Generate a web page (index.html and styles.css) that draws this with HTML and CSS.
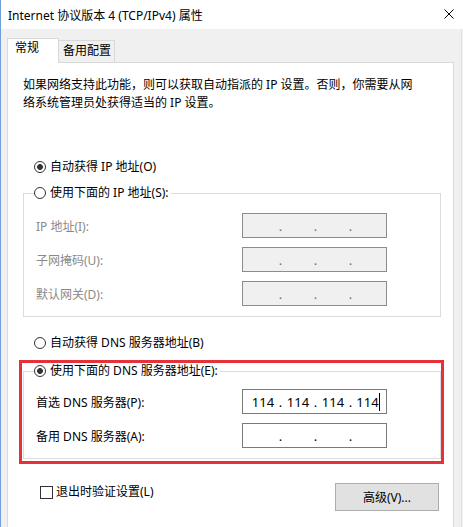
FILE: index.html
```html
<!DOCTYPE html>
<html lang="zh-CN">
<head>
  <meta charset="UTF-8">
  <meta name="viewport" content="width=device-width, initial-scale=1.0">
  <title>Internet 协议版本 4 (TCP/IPv4) 属性</title>
  <link rel="stylesheet" href="styles.css">
</head>
<body>
  <div class="window">
    <div class="titlebar">
      <span class="title">Internet 协议版本 4 (TCP/IPv4) 属性</span>
      <svg class="close" width="10" height="10" viewBox="0 0 10 10">
        <path d="M0.5 0.5 L9.5 9.5 M9.5 0.5 L0.5 9.5" stroke="#000" stroke-width="1" fill="none"/>
      </svg>
    </div>

    <div class="client">
      <div class="tabs">
        <div class="tab active">常规</div>
        <div class="tab">备用配置</div>
      </div>

      <div class="panel">
        <p class="intro">如果网络支持此功能，则可以获取自动指派的 IP 设置。否则，你需要从网<br>络系统管理员处获得适当的 IP 设置。</p>

        <label class="radio ipAuto"><span class="dot checked"></span>自动获得 IP 地址(O)</label>

        <fieldset class="group groupIp">
          <legend><label class="radio"><span class="dot"></span>使用下面的 IP 地址(S):</label></legend>
          <div class="field disabled first">
            <span class="label">IP 地址(I):</span>
            <div class="ipBox"><span class="oct"></span><span class="sep">.</span><span class="oct"></span><span class="sep">.</span><span class="oct"></span><span class="sep">.</span><span class="oct"></span></div>
          </div>
          <div class="field disabled">
            <span class="label">子网掩码(U):</span>
            <div class="ipBox"><span class="oct"></span><span class="sep">.</span><span class="oct"></span><span class="sep">.</span><span class="oct"></span><span class="sep">.</span><span class="oct"></span></div>
          </div>
          <div class="field disabled">
            <span class="label">默认网关(D):</span>
            <div class="ipBox"><span class="oct"></span><span class="sep">.</span><span class="oct"></span><span class="sep">.</span><span class="oct"></span><span class="sep">.</span><span class="oct"></span></div>
          </div>
        </fieldset>

        <label class="radio dnsAuto"><span class="dot"></span>自动获得 DNS 服务器地址(B)</label>

        <!-- red annotation box around the manual DNS group -->
        <div class="highlight">
          <fieldset class="group groupDns">
            <legend><label class="radio"><span class="dot checked"></span>使用下面的 DNS 服务器地址(E):</label></legend>
            <div class="field first">
              <span class="label">首选 DNS 服务器(P):</span>
              <div class="ipBox"><span class="oct">114</span><span class="sep">.</span><span class="oct">114</span><span class="sep">.</span><span class="oct">114</span><span class="sep">.</span><span class="oct"><span class="caret">114</span></span></div>
            </div>
            <div class="field">
              <span class="label">备用 DNS 服务器(A):</span>
              <div class="ipBox"><span class="oct"></span><span class="sep">.</span><span class="oct"></span><span class="sep">.</span><span class="oct"></span><span class="sep">.</span><span class="oct"></span></div>
            </div>
          </fieldset>
        </div>

        <div class="footer">
          <label class="check"><span class="box"></span>退出时验证设置(L)</label>
          <button class="button">高级(V)...</button>
        </div>
      </div>
    </div>
  </div>
</body>
</html>
```

FILE: styles.css
```css
* {
  box-sizing: border-box;
}

body {
  margin: 0;
  font-family: "Noto Sans", "Noto Sans CJK SC", sans-serif;
  font-size: 12px;
  color: #000;
  background: #f0f0f0;
  overflow: hidden;
}

.window {
  width: 463px;
  height: 527px;
  border-left: 1px solid #6f9fd8;
  display: flex;
  flex-direction: column;
  overflow: hidden;
}

/* Title bar */
.titlebar {
  height: 29px;
  flex-shrink: 0;
  background: #fff;
  display: flex;
  align-items: center;
  justify-content: space-between;
  padding: 0 9px 0 7px;
}

.close {
  margin-bottom: 2px;
}

/* Client area */
.client {
  flex: 1;
  background: #f0f0f0;
  border-right: 1px solid #e2e2e2;
  margin-right: 1px;
}

.tabs {
  display: flex;
  align-items: flex-end;
  padding: 9px 0 0 6px;
}

.tab {
  height: 22px;
  width: 57px;
  margin-left: -1px;
  padding: 1px 0 0 4px;
  line-height: 18px;
  background: #f0f0f0;
  border: 1px solid #d9d9d9;
  border-bottom: none;
}

.tab.active {
  position: relative;
  z-index: 1;
  margin-left: 0;
  width: 52px;
  height: 25px;
  padding: 0 0 0 7px;
  margin-bottom: -1px;
  background: #fff;
}

.panel {
  margin-left: 6px;
  width: 447px;
  height: 500px;
  background: #fff;
  border: 1px solid #d9d9d9;
  padding: 0 12px 0 15px;
}

.intro {
  margin: 13px 0 0 0;
  line-height: 18px;
}

/* Radio buttons */
.radio {
  display: flex;
  align-items: center;
  line-height: 18px;
  white-space: nowrap;
}

.dot {
  width: 12px;
  height: 12px;
  border: 1px solid #333;
  border-radius: 50%;
  margin-right: 4px;
  background: #fff;
  flex-shrink: 0;
}

.dot.checked {
  background: radial-gradient(circle, #333 0 2.6px, #fff 3.2px);
}

.ipAuto {
  margin: 46px 0 0 11px;
}

.dnsAuto {
  margin: 17px 0 0 11px;
}

/* Group boxes */
.group {
  margin: 0;
  border: 1px solid #dcdcdc;
  padding: 0 12px 10px 12px;
  min-inline-size: auto;
}

.group legend {
  padding: 0 2px 0 0;
  margin-left: -2px;
}

.groupIp {
  margin-top: 8px;
}

.field {
  display: flex;
  align-items: center;
  height: 25px;
  margin-top: 9px;
}

.groupIp .field.first {
  margin-top: 11px;
}

.groupDns .field.first {
  margin-top: 9px;
}

.label {
  width: 206px;
  white-space: nowrap;
}

.ipBox {
  width: 145px;
  height: 25px;
  border: 1px solid #7a7a7a;
  background: #fff;
  display: flex;
  align-items: center;
  padding-left: 5px;
  font-size: 13px;
  line-height: 18px;
}

.oct {
  width: 30px;
  text-align: center;
}

.sep {
  width: 5px;
  text-align: center;
}

.caret {
  border-right: 1px solid #000;
}

.field.disabled .label {
  color: #8a8a8a;
}

.field.disabled .ipBox {
  background: #f0f0f0;
  border-color: #8c8c8c;
  color: #6d6d6d;
}

/* Highlight box */
.highlight {
  position: relative;
  margin-top: 10px;
}

.highlight::after {
  content: "";
  position: absolute;
  top: -2px;
  left: -4px;
  right: -3px;
  bottom: -5px;
  border: 3px solid #e5323a;
  pointer-events: none;
}

/* Footer */
.footer {
  display: flex;
  justify-content: space-between;
  align-items: flex-start;
  margin-top: 24px;
  padding: 0 2px 0 17px;
}

.check {
  display: flex;
  align-items: center;
  line-height: 18px;
}

.box {
  width: 13px;
  height: 13px;
  border: 1px solid #333;
  background: #fff;
  margin-right: 3px;
}

.button {
  width: 104px;
  height: 28px;
  font-family: inherit;
  font-size: 12px;
  color: #000;
  background: #e1e1e1;
  border: 1px solid #adadad;
  padding: 0;
}
```
